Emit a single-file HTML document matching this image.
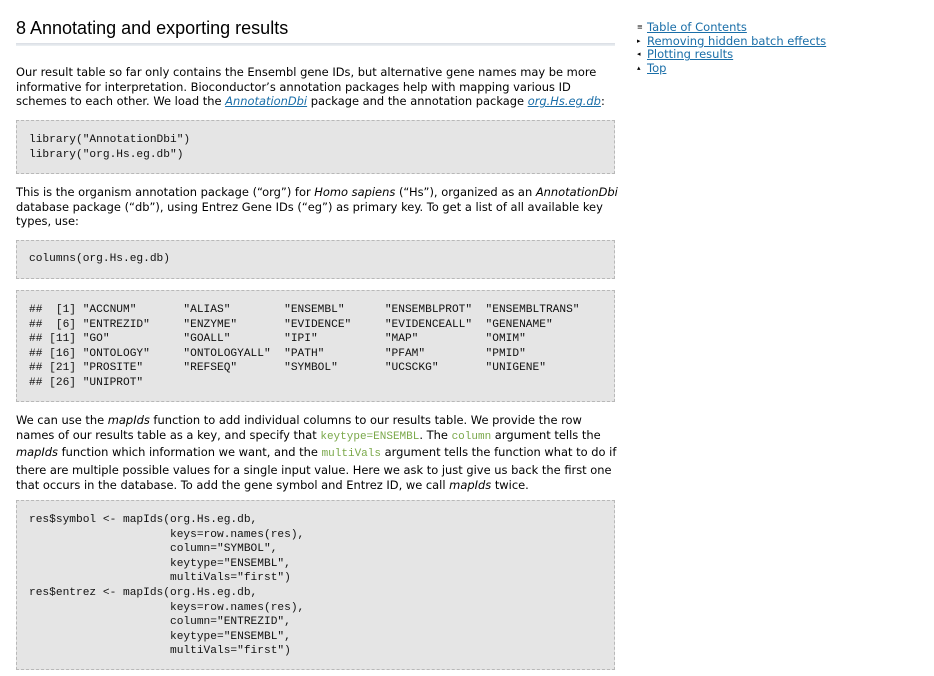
<!DOCTYPE html>
<html><head><meta charset="utf-8"><style>
body{margin:0;background:#fff;width:934px;height:676px;overflow:hidden;position:relative;font-family:"DejaVu Sans","Liberation Sans",sans-serif;font-size:11.45px;color:#000}
h1{position:absolute;left:16px;top:18px;margin:0;font-family:"Liberation Sans",sans-serif;font-weight:normal;font-size:18px;color:#000}
.rule{position:absolute;left:16px;top:43px;width:599px;height:3px;background:linear-gradient(#d8dde3,#eef1f4)}
p{position:absolute;left:16px;margin:0;line-height:14.6px;white-space:nowrap}
pre{position:absolute;left:16px;width:573px;margin:0;background:#e5e5e5;border:1px dashed #b8b8b8;padding:11px 12px;font-family:"Liberation Mono",monospace;font-size:11.2px;line-height:14.6px;color:#111}
a{color:#1a6ea8}
code{font-family:"Liberation Mono",monospace;color:#7aa84a;font-size:11px}
.toc{position:absolute;left:637px;top:21px;font-size:11.5px;line-height:13.7px}
.toc div{position:relative;padding-left:10px}
.toc span{position:absolute;left:0;top:0;font-size:7px}
</style></head><body>
<h1>8 Annotating and exporting results</h1>
<div class="rule"></div>
<p style="top:65px">Our result table so far only contains the Ensembl gene IDs, but alternative gene names may be more<br>informative for interpretation. Bioconductor’s annotation packages help with mapping various ID<br>schemes to each other. We load the <a href="#"><i>AnnotationDbi</i></a> package and the annotation package <a href="#"><i>org.Hs.eg.db</i></a>:</p>
<pre style="top:120px;padding-top:12px;height:29px">library("AnnotationDbi")
library("org.Hs.eg.db")</pre>
<p style="top:185px">This is the organism annotation package (“org”) for <i>Homo sapiens</i> (“Hs”), organized as an <i>AnnotationDbi</i><br>database package (“db”), using Entrez Gene IDs (“eg”) as primary key. To get a list of all available key<br>types, use:</p>
<pre style="top:240px;height:15px">columns(org.Hs.eg.db)</pre>
<pre style="top:290px;padding-top:12px;height:87px">##  [1] "ACCNUM"       "ALIAS"        "ENSEMBL"      "ENSEMBLPROT"  "ENSEMBLTRANS"
##  [6] "ENTREZID"     "ENZYME"       "EVIDENCE"     "EVIDENCEALL"  "GENENAME"    
## [11] "GO"           "GOALL"        "IPI"          "MAP"          "OMIM"        
## [16] "ONTOLOGY"     "ONTOLOGYALL"  "PATH"         "PFAM"         "PMID"        
## [21] "PROSITE"      "REFSEQ"       "SYMBOL"       "UCSCKG"       "UNIGENE"     
## [26] "UNIPROT"</pre>
<p style="top:413px">We can use the <i>mapIds</i> function to add individual columns to our results table. We provide the row<br>names of our results table as a key, and specify that <code>keytype=ENSEMBL</code>. The <code>column</code> argument tells the<br><span style="line-height:17px"><i>mapIds</i> function which information we want, and the <code>multiVals</code> argument tells the function what to do if</span><br>there are multiple possible values for a single input value. Here we ask to just give us back the first one<br>that occurs in the database. To add the gene symbol and Entrez ID, we call <i>mapIds</i> twice.</p>
<pre style="top:500px;padding-top:12px;height:145px">res$symbol &lt;- mapIds(org.Hs.eg.db,
                     keys=row.names(res),
                     column="SYMBOL",
                     keytype="ENSEMBL",
                     multiVals="first")
res$entrez &lt;- mapIds(org.Hs.eg.db,
                     keys=row.names(res),
                     column="ENTREZID",
                     keytype="ENSEMBL",
                     multiVals="first")</pre>
<div class="toc">
<div><span>≡</span><a href="#">Table of Contents</a></div>
<div><span>▸</span><a href="#">Removing hidden batch effects</a></div>
<div><span>◂</span><a href="#">Plotting results</a></div>
<div><span>▴</span><a href="#">Top</a></div>
</div>
</body></html>
